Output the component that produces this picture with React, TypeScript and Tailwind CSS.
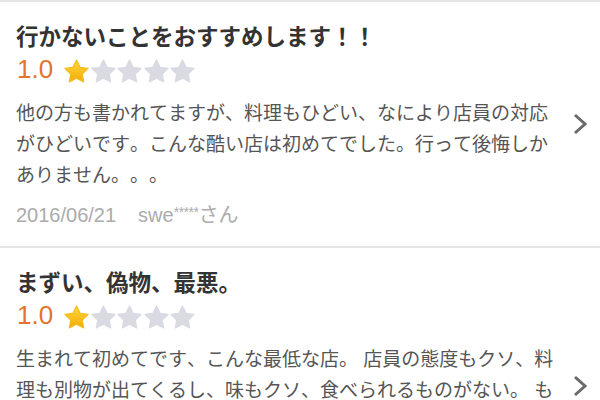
const reviews = [
    {
        title: '行かないことをおすすめします！！',
        rating: '1.0',
        body: '他の方も書かれてますが、料理もひどい、なにより店員の対応がひどいです。こんな酷い店は初めてでした。行って後悔しかありません。。。',
        date: '2016/06/21',
        user: 'swe',
    },
    {
        title: 'まずい、偽物、最悪。',
        rating: '1.0',
        body: '生まれて初めてです、こんな最低な店。 店員の態度もクソ、料理も別物が出てくるし、味もクソ、食べられるものがない。 もう二度と行きません。お金を払う価値もない店です。皆さんも気をつけてください。本当に最悪でした。',
        date: '2016/05/30',
        user: 'kaz',
    },
]

function Star({ on }: { on: boolean }) {
    return (
        <svg width="25" height="24" viewBox="-0.5 -0.5 25 24">
            <defs>
                <linearGradient id="gold" x1="0" y1="0" x2="0" y2="1">
                    <stop offset="0" stopColor="#ffd83a" />
                    <stop offset="1" stopColor="#f2ab0a" />
                </linearGradient>
            </defs>
            <polygon
                points="12,0.6 15.6,7.8 23.6,8.9 17.8,14.5 19.2,22.4 12,18.7 4.8,22.4 6.2,14.5 0.4,8.9 8.4,7.8"
                fill={on ? 'url(#gold)' : '#d9dae2'}
                stroke={on ? '#f5bd1e' : '#d9dae2'}
                strokeWidth="1.2"
                strokeLinejoin="round"
            />
        </svg>
    )
}

export default function App() {
    return (
        <div className="w-[600px] h-[400px] overflow-hidden bg-white font-['Liberation_Sans','Noto_Sans_CJK_JP',sans-serif] [text-spacing-trim:space-all] [font-kerning:none]">
            {reviews.map((r) => (
                <div key={r.title} className="flex items-center border-t-2 border-[#e6e6e6] pl-4">
                    <div className="w-[540px] pt-[18px] pb-[19px]">
                        {/*title*/}
                        <h2 className="text-[22.5px] leading-[30px] font-bold text-[#333] font-['Noto_Sans_CJK_JP',sans-serif]">
                            {r.title}
                        </h2>

                        {/*rating*/}
                        <div className="flex items-center h-[28px] mt-[5px]">
                            <span className="text-[26px] leading-none text-[#e2742f] ml-[1px]">{r.rating}</span>
                            <div className="flex gap-[1.5px] ml-[11px] mt-[4px]">
                                {[0, 1, 2, 3, 4].map((i) => (
                                    <Star key={i} on={i === 0} />
                                ))}
                            </div>
                        </div>

                        {/*body*/}
                        <p className="mt-[15px] text-[19px] leading-[31px] text-[#555]">
                            {r.body}
                        </p>

                        {/*date + user*/}
                        <div className="mt-[12px] flex items-start text-[20px] leading-[24px] text-[#ababab]">
                            <span>{r.date}</span>
                            <span className="ml-[22px]">{r.user}</span>
                            <span className="text-[14px] leading-[18px] tracking-[-0.5px]">*****</span>
                            <span>さん</span>
                        </div>
                    </div>

                    <svg width="14" height="22" viewBox="0 0 14 22" className="ml-[17px]">
                        <polyline points="2,2 12,11 2,20" fill="none" stroke="#6a6a6a" strokeWidth="3" />
                    </svg>
                </div>
            ))}
        </div>
    )
}
